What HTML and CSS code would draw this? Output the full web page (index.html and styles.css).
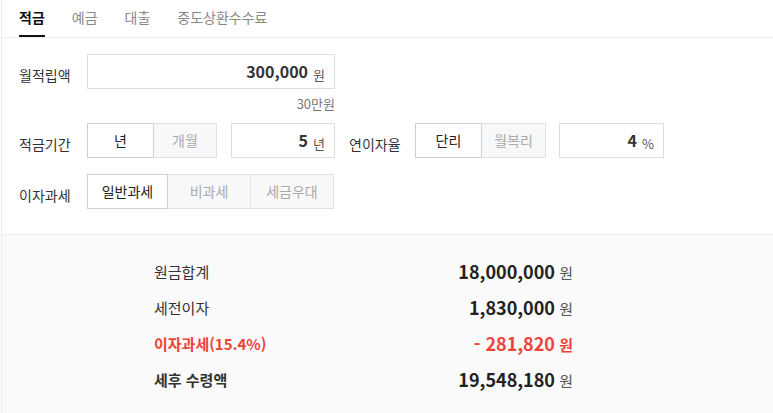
FILE: index.html
```html
<!DOCTYPE html>
<html lang="ko">
<head>
<meta charset="utf-8">
<link rel="stylesheet" href="styles.css">
</head>
<body>
<div class="app">
  <nav class="tabs">
    <span class="tab active">적금</span>
    <span class="tab">예금</span>
    <span class="tab">대출</span>
    <span class="tab">중도상환수수료</span>
  </nav>
  <section class="form">
    <div class="row">
      <span class="label">월적립액</span>
      <div class="input w-amount"><b class="num">300,000</b><span class="unit">원</span></div>
    </div>
    <div class="hint">30만원</div>
    <div class="row">
      <span class="label">적금기간</span>
      <div class="seg">
        <span class="opt on w67">년</span><span class="opt w63">개월</span>
      </div>
      <div class="input w-small"><b class="num">5</b><span class="unit">년</span></div>
      <span class="label label2">연이자율</span>
      <div class="seg">
        <span class="opt on w67">단리</span><span class="opt w64">월복리</span>
      </div>
      <div class="input w-small2"><b class="num">4</b><span class="unit">%</span></div>
    </div>
    <div class="row row3">
      <span class="label">이자과세</span>
      <div class="seg">
        <span class="opt on w81">일반과세</span><span class="opt w83">비과세</span><span class="opt w83">세금우대</span>
      </div>
    </div>
  </section>
  <section class="result">
    <div class="res-row"><span class="r-label">원금합계</span><span class="r-val"><b>18,000,000</b> 원</span></div>
    <div class="res-row"><span class="r-label">세전이자</span><span class="r-val"><b>1,830,000</b> 원</span></div>
    <div class="res-row red"><span class="r-label">이자과세(15.4%)</span><span class="r-val"><b>- 281,820</b> 원</span></div>
    <div class="res-row"><span class="r-label strong">세후 수령액</span><span class="r-val"><b>19,548,180</b> 원</span></div>
  </section>
</div>
</body>
</html>
```
FILE: styles.css
```css
* { box-sizing: border-box; }
html, body { margin: 0; padding: 0; background: #fff; }
body {
  font-family: "Noto Sans CJK KR", "Noto Sans", sans-serif;
  color: #333;
  width: 773px;
  height: 413px;
  overflow: hidden;
}
.app {
  border-left: 1px solid #ececec;
  margin-left: 1px;
  height: 413px;
}
.tabs {
  display: flex;
  gap: 27px;
  padding-left: 17px;
  height: 38px;
  border-bottom: 1px solid #eeeeee;
}
.tab {
  font-size: 14px;
  line-height: 35px;
  color: #888;
  height: 37px;
}
.tab.active {
  color: #111;
  font-weight: 700;
  border-bottom: 2px solid #111;
}
.form {
  padding: 16px 0 25px 17px;
}
.row {
  display: flex;
  align-items: center;
  height: 35px;
}
.row3 { margin-top: 16px; }
.label {
  width: 68px;
  font-size: 14px;
  color: #333;
  padding-top: 6px;
}
.label2 { width: 66px; margin-left: 14px; }
.input {
  height: 35px;
  border: 1px solid #dddddd;
  background: #fff;
  display: flex;
  align-items: baseline;
  justify-content: flex-end;
  padding: 0 9px 0 0;
  line-height: 33px;
}
.w-amount { width: 248px; }
.w-small { width: 104px; margin-left: 14px; }
.w-small2 { width: 105px; margin-left: 13px; }
.num {
  font-size: 16px;
  font-weight: 700;
  color: #333;
}
.unit {
  font-size: 13px;
  color: #555;
  margin-left: 5px;
  position: relative;
  top: 2px;
}
.hint {
  width: 316px;
  text-align: right;
  font-size: 13px;
  color: #777;
  height: 34px;
  line-height: 30px;
}
.seg {
  display: flex;
  height: 35px;
}
.opt {
  height: 35px;
  line-height: 33px;
  text-align: center;
  font-size: 14px;
  color: #aaa;
  background: #f7f8fa;
  border: 1px solid #e2e2e2;
  border-left: none;
}
.opt.on {
  background: #fff;
  color: #222;
  border: 1px solid #cfcfcf;
}
.w67 { width: 67px; }
.w63 { width: 63px; }
.w64 { width: 64px; }
.w81 { width: 81px; }
.w83 { width: 83px; }
.result {
  border-top: 1px solid #eeeeee;
  background: #fafafa;
  padding: 18px 0 0 152px;
  height: 180px;
}
.res-row {
  width: 419px;
  height: 36px;
  display: flex;
  align-items: center;
  justify-content: space-between;
}
.r-label {
  font-size: 15px;
  color: #333;
}
.r-label.strong { font-weight: 700; }
.r-val {
  font-size: 15px;
  color: #555;
}
.r-val b {
  font-size: 18px;
  font-weight: 700;
  color: #222;
}
.red .r-label, .red .r-val, .red .r-val b {
  color: #ee4339;
  font-weight: 700;
}
```
